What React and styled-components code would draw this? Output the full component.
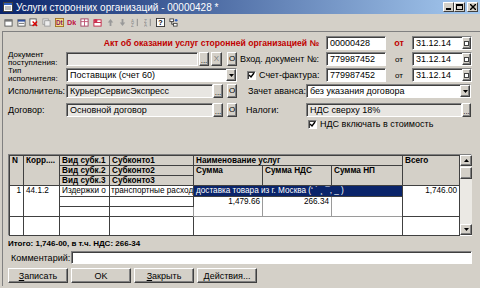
import React from 'react';
import styled, { createGlobalStyle } from 'styled-components';

const Global = createGlobalStyle`
	html,
	body {
		margin: 0;
		padding: 0;
		background: #d4d0c8;
		overflow: hidden;
	}
	body {
		font-family: "Liberation Sans", Arial, sans-serif;
		font-size: 9px;
		color: #000;
	}
`;

const Window = styled.div`
	width: 480px;
	height: 288px;
	display: flex;
	flex-direction: column;
	background: #d4d0c8;
	overflow: hidden;
`;

const TitleBar = styled.div`
	height: 14px;
	flex: none;
	display: flex;
	align-items: center;
	padding: 0 2px 0 3px;
	background: linear-gradient(90deg, #0a246a 0%, #a6caf0 100%);
	color: #fff;
	font-size: 10px;
`;

const TitleText = styled.span`
	flex: 1;
	margin-left: 3px;
	white-space: nowrap;
`;

const CaptionButton = styled.div`
	box-sizing: border-box;
	width: 11px;
	height: 10px;
	margin-left: ${p => p.$ml || 0}px;
	background: #d4d0c8;
	border: 1px solid;
	border-color: #fff #404040 #404040 #fff;
	display: flex;
	align-items: center;
	justify-content: center;
`;

const Toolbar = styled.div`
	height: 17px;
	flex: none;
	display: flex;
	align-items: center;
	gap: 3.7px;
	padding-left: 4px;
`;

const ToolIcon = styled.svg`
	width: 9px;
	height: 9px;
	flex: none;
`;

const Panel = styled.div`
	flex: 1;
	display: flex;
	flex-direction: column;
	margin: 0 0 2px 2px;
	border-top: 1px solid #808080;
	border-left: 1px solid #808080;
	padding: 4px 0 0 5px;
`;

const Row = styled.div`
	display: flex;
	align-items: center;
	height: ${p => p.$h || 14}px;
	margin-top: ${p => p.$mt || 0}px;
	flex: none;
`;

const Side = styled.div`
	display: flex;
	align-items: center;
	width: ${p => p.$w}px;
	height: 100%;
	padding-left: ${p => p.$pl || 0}px;
	box-sizing: border-box;
	flex: none;
`;

const ActTitle = styled.div`
	width: 311px;
	margin-right: 7px;
	text-align: right;
	color: #c00000;
	font-weight: bold;
	font-size: 8.6px;
	white-space: nowrap;
`;

const Label = styled.div`
	width: ${p => p.$w}px;
	padding-left: ${p => p.$pl || 0}px;
	box-sizing: border-box;
	justify-content: ${p => (p.$right ? 'flex-end' : 'flex-start')};
	white-space: nowrap;
	flex: none;
	display: flex;
	align-items: center;
`;

const TwoLines = styled.div`
	font-size: 8px;
	line-height: 8px;
`;

const Ot = styled.div`
	width: 26px;
	text-align: center;
	flex: none;
	color: ${p => (p.$red ? '#c00000' : '#000')};
	font-weight: ${p => (p.$red ? 'bold' : 'normal')};
	font-size: ${p => (p.$red ? 9 : 8)}px;
`;

const Field = styled.div`
	box-sizing: border-box;
	width: ${p => p.$w}px;
	height: ${p => p.$h || 14}px;
	margin-left: ${p => p.$ml || 0}px;
	background: ${p => (p.$grey ? '#e8e6e2' : '#fff')};
	border: 1px solid;
	border-color: #808080 #fff #fff #808080;
	box-shadow: inset 1px 1px 0 #404040;
	padding: 0 0 0 3px;
	display: flex;
	align-items: center;
	white-space: nowrap;
	overflow: hidden;
	flex: none;
`;

const FieldText = styled.span`
	flex: 1;
	overflow: hidden;
`;

const MiniButton = styled.div`
	box-sizing: border-box;
	width: ${p => p.$w || 10}px;
	height: ${p => p.$h || 14}px;
	margin-left: ${p => p.$ml || 0}px;
	background: #d4d0c8;
	border: 1px solid;
	border-color: #fff #404040 #404040 #fff;
	box-shadow: inset -1px -1px 0 #808080;
	display: flex;
	align-items: ${p => (p.$dots ? 'flex-end' : 'center')};
	justify-content: center;
	font-size: 8px;
	line-height: 8px;
	color: ${p => (p.$dim ? '#808080' : '#000')};
	flex: none;
`;

const Check = styled.div`
	box-sizing: border-box;
	width: 9px;
	height: 9px;
	background: #fff;
	border: 1px solid;
	border-color: #808080 #fff #fff #808080;
	box-shadow: inset 1px 1px 0 #404040;
	margin-right: 3px;
	flex: none;
	display: flex;
	align-items: center;
	justify-content: center;
`;

const TableBox = styled.div`
	display: flex;
	width: 464px;
	height: 82px;
	box-sizing: border-box;
	margin-top: 25px;
	border: 1px solid;
	border-color: #808080 #fff #fff #808080;
	background: #fff;
	flex: none;
`;

const Grid = styled.table`
	border-collapse: collapse;
	table-layout: fixed;
	width: 450px;
	font-size: 8.2px;
	align-self: flex-start;
`;

const GridRow = styled.tr`
	height: ${p => p.$h}px;
`;

const HeadCell = styled.th`
	background: #d4d0c8;
	border: 1px solid #404040;
	padding: 0 2px;
	line-height: 9px;
	font-weight: bold;
	text-align: left;
	vertical-align: top;
	white-space: nowrap;
	overflow: hidden;
`;

const Cell = styled.td`
	border: 1px solid ${p => (p.$soft ? '#9a9a9a' : '#404040')};
	padding: 0 ${p => (p.$tight ? 1 : 2)}px;
	line-height: 9px;
	text-align: ${p => (p.$right ? 'right' : 'left')};
	vertical-align: top;
	white-space: nowrap;
	overflow: hidden;
	background: ${p => (p.$selected ? '#0a246a' : '#fff')};
	color: ${p => (p.$selected ? '#fff' : '#000')};
`;

const ScrollBar = styled.div`
	width: 12px;
	display: flex;
	flex-direction: column;
	background: #ebe9e4;
	flex: none;
`;

const ScrollButton = styled.div`
	box-sizing: border-box;
	height: ${p => p.$h || 11}px;
	margin-top: ${p => p.$mt || 0}px;
	background: #d4d0c8;
	border: 1px solid;
	border-color: #fff #404040 #404040 #fff;
	box-shadow: inset -1px -1px 0 #808080;
	display: flex;
	align-items: center;
	justify-content: center;
	flex: none;
`;

const Track = styled.div`
	flex: 1;
`;

const Total = styled.div`
	margin-top: 3px;
	height: 10px;
	line-height: 10px;
	font-weight: bold;
	font-size: 8px;
	flex: none;
`;

const Buttons = styled.div`
	display: flex;
	gap: 3px;
	margin-top: 4px;
	flex: none;
`;

const PushButton = styled.div`
	box-sizing: border-box;
	width: 60px;
	height: 15px;
	background: #d4d0c8;
	border: 1px solid;
	border-color: #fff #404040 #404040 #fff;
	box-shadow: inset -1px -1px 0 #808080;
	display: flex;
	align-items: center;
	justify-content: center;
	font-size: 9px;
	& u {
		text-decoration: underline;
	}
`;

const Arrow = ({ up }) => (
	<svg width="5" height="3" viewBox="0 0 5 3">
		<polygon points={up ? '0,3 5,3 2.5,0' : '0,0 5,0 2.5,3'} fill="#000" />
	</svg>
);

const Tick = () => (
	<svg width="7" height="7" viewBox="0 0 7 7">
		<polyline points="1,3 3,5 6,1" fill="none" stroke="#000" strokeWidth="1.4" />
	</svg>
);

const Select = ({ w, children }) => (
	<Field $w={w}>
		<FieldText>{children}</FieldText>
		<MiniButton $w={10} $h={12}>
			<Arrow />
		</MiniButton>
	</Field>
);

const DateField = ({ children }) => (
	<Field $w={60}>
		<FieldText>{children}</FieldText>
		<MiniButton $w={9} $h={12}>
			<svg width="5" height="5" viewBox="0 0 5 5">
				<rect x="0.5" y="0.5" width="4" height="4" fill="#fff" stroke="#404040" />
			</svg>
		</MiniButton>
	</Field>
);

const toolIcons = [
	<>
		<rect x="1" y="2" width="8" height="7" fill="#fff" stroke="#555" />
		<rect x="1" y="2" width="8" height="2" fill="#777" />
	</>,
	<>
		<rect x="1" y="2" width="8" height="7" fill="#fff" stroke="#555" />
		<rect x="1" y="2" width="8" height="2" fill="#3050a0" />
		<line x1="2" y1="6" x2="8" y2="6" stroke="#666" />
	</>,
	<>
		<rect x="1" y="1" width="7" height="7" fill="#fff" stroke="#555" />
		<line x1="4" y1="4" x2="9" y2="9" stroke="#d00" strokeWidth="1.5" />
		<line x1="9" y1="4" x2="4" y2="9" stroke="#d00" strokeWidth="1.5" />
	</>,
	<>
		<rect x="1" y="1" width="6" height="6" fill="#eee" stroke="#999" />
		<rect x="3" y="3" width="6" height="6" fill="#eee" stroke="#999" />
	</>,
	<>
		<rect x="0.5" y="0.5" width="9" height="9" fill="#f4e08a" stroke="#a07020" />
		<text x="1" y="8" fontSize="7" fontWeight="bold" fill="#8a1060" fontFamily="Liberation Sans">Dt</text>
	</>,
	<text x="0" y="8" fontSize="8" fontWeight="bold" fill="#c01040" fontFamily="Liberation Sans">Dk</text>,
	<>
		<rect x="1" y="1" width="8" height="8" fill="#fff" stroke="#a04060" />
		<line x1="1" y1="4" x2="9" y2="4" stroke="#c05070" />
		<line x1="5" y1="1" x2="5" y2="9" stroke="#c05070" />
	</>,
	<>
		<rect x="1" y="2" width="8" height="7" fill="#fff" stroke="#c02040" />
		<line x1="1" y1="5" x2="9" y2="5" stroke="#c02040" />
		<circle cx="3" cy="3" r="2" fill="#d03050" />
	</>,
	<polygon points="5,1 8,5 6,5 6,9 4,9 4,5 2,5" fill="#999" />,
	<polygon points="5,9 8,5 6,5 6,1 4,1 4,5 2,5" fill="#999" />,
	<>
		<text x="0" y="5" fontSize="5" fill="#888" fontFamily="Liberation Sans">A</text>
		<text x="0" y="10" fontSize="5" fill="#888" fontFamily="Liberation Sans">Z</text>
		<line x1="7" y1="1" x2="7" y2="9" stroke="#888" />
	</>,
	<>
		<text x="0" y="5" fontSize="5" fill="#888" fontFamily="Liberation Sans">Z</text>
		<text x="0" y="10" fontSize="5" fill="#888" fontFamily="Liberation Sans">A</text>
		<line x1="7" y1="1" x2="7" y2="9" stroke="#888" />
	</>,
	<>
		<rect x="0.5" y="0.5" width="9" height="9" fill="#fff" stroke="#333" />
		<text x="2.5" y="8" fontSize="8" fontWeight="bold" fill="#000" fontFamily="Liberation Sans">?</text>
	</>,
	<>
		<rect x="1" y="1" width="4" height="3" fill="#fff" stroke="#444" />
		<rect x="5" y="6" width="4" height="3" fill="#fff" stroke="#444" />
		<polyline points="3,4 3,7 5,7" fill="none" stroke="#444" />
		<circle cx="8" cy="2.5" r="1.5" fill="#3060c0" />
	</>,
];

const App = () => (
	<Window>
		<Global />
		<TitleBar>
			<svg width="10" height="10" viewBox="0 0 10 10">
				<rect x="0.5" y="0.5" width="9" height="9" fill="#fff" stroke="#404040" />
				<rect x="1" y="1" width="8" height="2" fill="#3060c0" />
				<line x1="2" y1="5" x2="8" y2="5" stroke="#808080" />
				<line x1="2" y1="7" x2="8" y2="7" stroke="#808080" />
			</svg>
			<TitleText>Услуги сторонних организаций - 00000428 *</TitleText>
			<CaptionButton>
				<svg width="5" height="5" viewBox="0 0 5 5">
					<rect x="0" y="3" width="5" height="2" fill="#000" />
				</svg>
			</CaptionButton>
			<CaptionButton>
				<svg width="7" height="6" viewBox="0 0 7 6">
					<rect x="0.5" y="0.5" width="6" height="5" fill="none" stroke="#000" />
					<line x1="0" y1="1.5" x2="7" y2="1.5" stroke="#000" />
				</svg>
			</CaptionButton>
			<CaptionButton $ml={2}>
				<svg width="6" height="6" viewBox="0 0 6 6">
					<line x1="0" y1="0" x2="6" y2="6" stroke="#000" strokeWidth="1.4" />
					<line x1="6" y1="0" x2="0" y2="6" stroke="#000" strokeWidth="1.4" />
				</svg>
			</CaptionButton>
		</TitleBar>
		<Toolbar>
			{toolIcons.map((icon, i) => (
				<ToolIcon key={i} viewBox="0 0 10 10">
					{icon}
				</ToolIcon>
			))}
		</Toolbar>
		<Panel>
			<Row>
				<ActTitle>Акт об оказании услуг сторонней организацией №</ActTitle>
				<Field $w={60}>00000428</Field>
				<Ot $red>от</Ot>
				<DateField>31.12.14</DateField>
			</Row>
			<Row $mt={2}>
				<Side $w={229}>
					<Label $w={58}>
						<TwoLines>
							Документ
							<br />
							поступления:
						</TwoLines>
					</Label>
					<Field $w={132} $grey />
					<MiniButton $ml={1} $dots>...</MiniButton>
					<MiniButton $w={11} $ml={2} $dim>X</MiniButton>
					<MiniButton $ml={5}>O</MiniButton>
				</Side>
				<Side $w={235}>
					<Label $w={82} $right>Вход. документ №:</Label>
					<Field $w={60} $ml={7}>779987452</Field>
					<Ot>от</Ot>
					<DateField>31.12.14</DateField>
				</Side>
			</Row>
			<Row $mt={2}>
				<Side $w={229}>
					<Label $w={58}>
						<TwoLines>
							Тип
							<br />
							исполнителя:
						</TwoLines>
					</Label>
					<Select w={171}>Поставщик (счет 60)</Select>
				</Side>
				<Side $w={235}>
					<Label $w={89} $pl={10}>
						<Check>
							<Tick />
						</Check>
						Счет-фактура:
					</Label>
					<Field $w={60}>779987452</Field>
					<Ot>от</Ot>
					<DateField>31.12.14</DateField>
				</Side>
			</Row>
			<Row $mt={2}>
				<Side $w={229}>
					<Label $w={58}>Исполнитель:</Label>
					<Field $w={147} $grey>КурьерСервисЭкспресс</Field>
					<MiniButton $dots>...</MiniButton>
					<MiniButton $ml={4}>O</MiniButton>
				</Side>
				<Side $w={235}>
					<Label $w={69} $pl={11}>Зачет аванса:</Label>
					<Select w={165}>без указания договора</Select>
				</Side>
			</Row>
			<Row $mt={5}>
				<Side $w={229}>
					<Label $w={58}>Договор:</Label>
					<Field $w={147} $grey>Основной договор</Field>
					<MiniButton $dots>...</MiniButton>
					<MiniButton $ml={4}>O</MiniButton>
				</Side>
				<Side $w={235}>
					<Label $w={69} $pl={9}>Налоги:</Label>
					<Field $w={156} $grey>НДС сверху 18%</Field>
					<MiniButton $w={9} $dots>...</MiniButton>
				</Side>
			</Row>
			<Row $mt={2} $h={10}>
				<Side $w={229} />
				<Side $w={235} $pl={71}>
					<Check>
						<Tick />
					</Check>
					НДС включать в стоимость
				</Side>
			</Row>
			<TableBox>
				<Grid>
					<colgroup>
						<col style={{ width: 14 }} />
						<col style={{ width: 36 }} />
						<col style={{ width: 50 }} />
						<col style={{ width: 84 }} />
						<col style={{ width: 69 }} />
						<col style={{ width: 69 }} />
						<col style={{ width: 71 }} />
						<col style={{ width: 57 }} />
					</colgroup>
					<thead>
						<GridRow $h={10}>
							<HeadCell rowSpan={3}>N</HeadCell>
							<HeadCell rowSpan={3}>Корр....</HeadCell>
							<HeadCell>Вид субк.1</HeadCell>
							<HeadCell>Субконто1</HeadCell>
							<HeadCell colSpan={3}>Наименование услуг</HeadCell>
							<HeadCell rowSpan={3}>Всего</HeadCell>
						</GridRow>
						<GridRow $h={10}>
							<HeadCell>Вид субк.2</HeadCell>
							<HeadCell>Субконто2</HeadCell>
							<HeadCell rowSpan={2}>Сумма</HeadCell>
							<HeadCell rowSpan={2}>Сумма НДС</HeadCell>
							<HeadCell rowSpan={2}>Сумма НП</HeadCell>
						</GridRow>
						<GridRow $h={10}>
							<HeadCell>Вид субк.3</HeadCell>
							<HeadCell>Субконто3</HeadCell>
						</GridRow>
					</thead>
					<tbody>
						<GridRow $h={11}>
							<Cell rowSpan={3} $right>1</Cell>
							<Cell rowSpan={3}>44.1.2</Cell>
							<Cell>Издержки о</Cell>
							<Cell $tight>транспортные расход</Cell>
							<Cell colSpan={3} $selected>
								доставка товара из г. Москва (&#8216; &#729; ¸ &#175;, _ )
							</Cell>
							<Cell rowSpan={3} $right>1,746.00</Cell>
						</GridRow>
						<GridRow $h={10}>
							<Cell />
							<Cell />
							<Cell rowSpan={2} $right $soft>1,479.66</Cell>
							<Cell rowSpan={2} $right $soft>266.34</Cell>
							<Cell rowSpan={2} $soft />
						</GridRow>
						<GridRow $h={10}>
							<Cell />
							<Cell />
						</GridRow>
						<GridRow $h={19}>
							<Cell />
							<Cell />
							<Cell />
							<Cell />
							<Cell colSpan={3} />
							<Cell />
						</GridRow>
					</tbody>
				</Grid>
				<ScrollBar>
					<ScrollButton>
						<Arrow up />
					</ScrollButton>
					<ScrollButton $h={12} $mt={1} />
					<Track />
					<ScrollButton>
						<Arrow />
					</ScrollButton>
				</ScrollBar>
			</TableBox>
			<Total>Итого: 1,746-00, в т.ч. НДС: 266-34</Total>
			<Row $mt={2} $h={13}>
				<Label $w={63} $pl={3}>Комментарий:</Label>
				<Field $w={401} $h={13} />
			</Row>
			<Buttons>
				<PushButton>
					<u>З</u>аписать
				</PushButton>
				<PushButton>OK</PushButton>
				<PushButton>
					<u>З</u>акрыть
				</PushButton>
				<PushButton>
					<u>Д</u>ействия...
				</PushButton>
			</Buttons>
		</Panel>
	</Window>
);

export default App;
